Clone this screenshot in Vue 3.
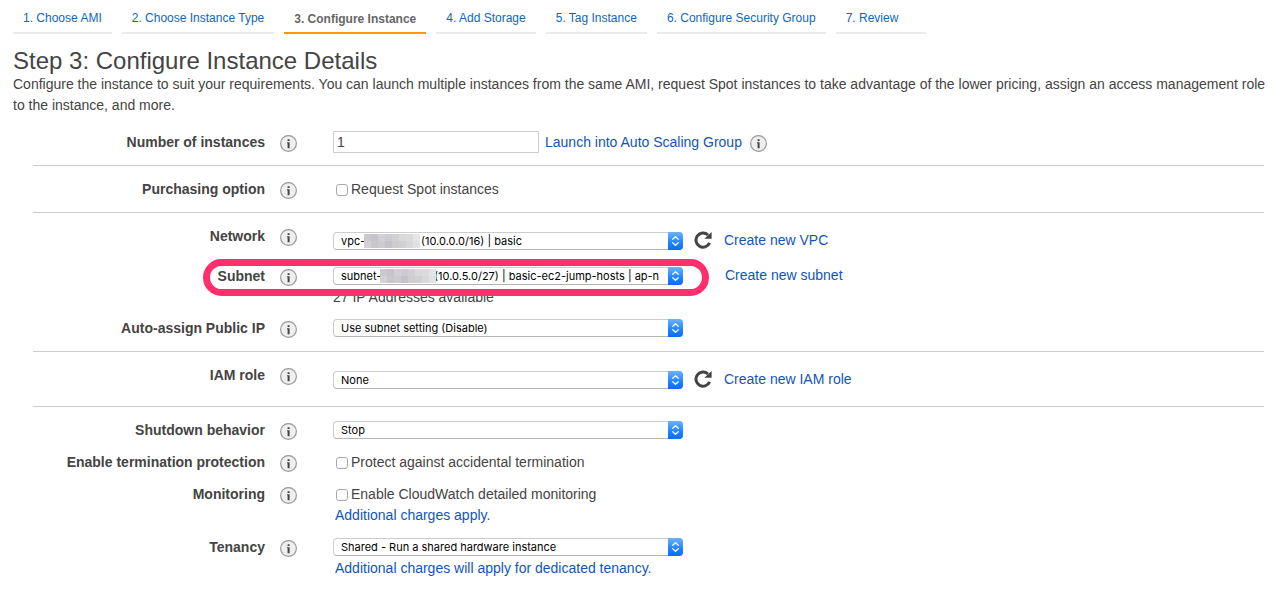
<script setup>
import { reactive } from 'vue'

const tabs = [
  '1. Choose AMI',
  '2. Choose Instance Type',
  '3. Configure Instance',
  '4. Add Storage',
  '5. Tag Instance',
  '6. Configure Security Group',
  '7. Review',
]
const activeTab = 2

const gap = (n) => '\u00a0'.repeat(n)

const sections = [
  [
    {
      id: 'count', label: 'Number of instances', type: 'text',
      link: 'Launch into Auto Scaling Group', info: true,
    },
  ],
  [{ id: 'spot', label: 'Purchasing option', type: 'check', text: 'Request Spot instances' }],
  [
    {
      id: 'network', label: 'Network', type: 'select', tall: true, refresh: true,
      option: `vpc-${gap(18)}(10.0.0.0/16) | basic`, mask: 'mask-network', link: 'Create new VPC',
    },
    {
      id: 'subnet', label: 'Subnet', type: 'select', marked: true, mask: 'mask-subnet',
      option: `subnet-${gap(17)}(10.0.5.0/27) | basic-ec2-jump-hosts | ap-n`,
      link: 'Create new subnet', note: '27 IP Addresses available',
    },
    { id: 'public-ip', label: 'Auto-assign Public IP', type: 'select', option: 'Use subnet setting (Disable)' },
  ],
  [
    {
      id: 'iam', label: 'IAM role', type: 'select', tall: true, refresh: true,
      option: 'None', link: 'Create new IAM role',
    },
  ],
  [
    { id: 'shutdown', label: 'Shutdown behavior', type: 'select', option: 'Stop' },
    { id: 'protect', label: 'Enable termination protection', type: 'check', text: 'Protect against accidental termination' },
    {
      id: 'monitoring', label: 'Monitoring', type: 'check', text: 'Enable CloudWatch detailed monitoring',
      noteLink: 'Additional charges apply.',
    },
    {
      id: 'tenancy', label: 'Tenancy', type: 'select', option: 'Shared - Run a shared hardware instance',
      noteLink: 'Additional charges will apply for dedicated tenancy.',
    },
  ],
]

const checked = reactive({ spot: false, protect: false, monitoring: false })
const count = reactive({ value: '1' })

const maskColors = [
  '#cbc8cc', '#c6c4c8', '#d2d0d4', '#cdcbd2', '#d3d0d3', '#d9d8da', '#dcdbdc', '#e6e5e6',
  '#d3d1d4', '#c9c7cb', '#cecbcf', '#c4c2ca', '#cfccd1', '#d0cfd2', '#d8d7d9', '#e2e1e2',
]
</script>

<template>
  <main class="page">
    <nav class="tabs" aria-label="Wizard steps">
      <a v-for="(t, i) in tabs" :key="t" href="#" class="tab" :class="{ active: i === activeTab }">{{ t }}</a>
    </nav>

    <header class="intro">
      <h1>Step 3: Configure Instance Details</h1>
      <p>
        Configure the instance to suit your requirements. You can launch multiple instances from the same AMI,
        request Spot instances to take advantage of the lower pricing, assign an access management role to the
        instance, and more.
      </p>
    </header>

    <form class="form" @submit.prevent>
      <section v-for="(rows, s) in sections" :key="s" class="section">
        <div v-for="row in rows" :key="row.id" class="row">
          <label class="name" :for="row.id">{{ row.label }}</label>
          <button type="button" class="info" :aria-label="`About ${row.label}`">
            <svg viewBox="0 0 17 17" width="17" height="17" aria-hidden="true">
              <circle cx="8.5" cy="8.5" r="7.9" fill="#efefef" stroke="#999" stroke-width="1.2" />
              <path d="M7.600 4.200h2v1.900h-2zM7 7.200h2.600v6H7.600V8.200H7z" fill="#444" />
            </svg>
          </button>
          <div class="field">
            <div class="line" :class="{ tall: row.tall }">
              <input v-if="row.type === 'text'" :id="row.id" v-model="count.value" class="text" type="text" />
              <template v-else-if="row.type === 'check'">
                <input :id="row.id" v-model="checked[row.id]" class="check" type="checkbox" />
                <label :for="row.id">{{ row.text }}</label>
              </template>
              <div v-else class="picker">
                <select :id="row.id"><option>{{ row.option }}</option></select>
                <span v-if="row.mask" class="mask" :class="row.mask" aria-hidden="true">
                  <i v-for="(c, k) in maskColors" :key="k" :style="{ background: c }"></i>
                </span>
                <span class="stepper" aria-hidden="true">
                  <svg viewBox="0 0 15 18" width="15" height="18">
                    <path d="M4.700 7.300 7.500 4.700l2.800 2.600M4.700 10.700l2.800 2.600 2.800-2.600" fill="none" stroke="#fff" stroke-width="1.200" stroke-linecap="round" stroke-linejoin="round" />
                  </svg>
                </span>
              </div>
              <button v-if="row.refresh" type="button" class="refresh" :aria-label="`Refresh ${row.label}`">
                <svg viewBox="0 0 18 18" width="18" height="18" aria-hidden="true">
                  <path d="M15.600 11.900A7.100 7.100 0 1 1 14 4" fill="none" stroke="#444" stroke-width="3" />
                  <path d="M17.600.900v6.900h-7.300z" fill="#444" />
                </svg>
              </button>
              <a v-if="row.link" href="#" :class="[`after-${row.type}`, { apart: row.type === 'select' && !row.refresh }]">{{ row.link }}</a>
              <button v-if="row.info" type="button" class="info inline" :aria-label="`About ${row.link}`">
                <svg viewBox="0 0 17 17" width="17" height="17" aria-hidden="true">
                  <circle cx="8.5" cy="8.5" r="7.9" fill="#efefef" stroke="#999" stroke-width="1.2" />
                  <path d="M7.600 4.200h2v1.900h-2zM7 7.200h2.600v6H7.600V8.200H7z" fill="#444" />
                </svg>
              </button>
            </div>
            <div v-if="row.note" class="note">{{ row.note }}</div>
            <a v-if="row.noteLink" href="#" class="note-link">{{ row.noteLink }}</a>
          </div>
          <span v-if="row.marked" class="marker" aria-hidden="true"></span>
        </div>
      </section>
    </form>
  </main>
</template>

<style>
body {
  background: #fff;
}
</style>

<style scoped>
.page {
  font-family: "Liberation Sans", Arial, sans-serif;
  font-size: 14px;
  line-height: 21px;
  color: #444;
}

a {
  color: #1155bb;
  text-decoration: none;
}

button {
  padding: 0;
  border: 0;
  background: none;
}

svg {
  display: block;
}

.tabs {
  display: flex;
  gap: 10px;
  padding: 0 13px;
  font-size: 12px;
}

.tab {
  box-sizing: border-box;
  min-width: 90px;
  height: 34px;
  padding: 8px 10px 0;
  border-bottom: 2px solid #eaeaea;
  color: #1166bb;
}

.tab.active {
  padding-top: 9px;
  border-color: #ff9900;
  color: #666;
  font-weight: bold;
}

.intro {
  padding: 14px 4px 0 13px;
}

h1 {
  margin: 0;
  font-size: 24px;
  font-weight: normal;
  line-height: 26px;
}

p {
  margin: 0;
}

.form {
  padding: 3px 18px 16px 33px;
}

.section {
  display: flex;
  flex-direction: column;
  gap: 11px;
  padding: 13px 0 12px;
  border-bottom: 1px solid #ccc;
}

.section:last-child {
  border-bottom: 0;
}

.row {
  position: relative;
  display: grid;
  grid-template-columns: 232px 17px 1fr;
  column-gap: 15px;
  align-items: start;
}

.name {
  font-weight: bold;
  text-align: right;
}

.info {
  margin-top: 3px;
}

.info.inline {
  margin-top: 2px;
  margin-left: 8px;
}

.field {
  padding-left: 21px;
}

.line {
  display: flex;
  align-items: center;
  height: 21px;
}

.line.tall {
  height: 29px;
}

.text {
  box-sizing: border-box;
  width: 206px;
  height: 22px;
  margin: 0 0 2px;
  padding: 0 3px;
  border: 1px solid #ccc;
  color: #444;
  font: inherit;
}

.check {
  appearance: none;
  box-sizing: border-box;
  width: 12px;
  height: 12px;
  margin: 1px 3px 0;
  border: 1px solid #aaa;
  border-radius: 3px;
  background: #fff;
}

.check:checked {
  background: #2b88f5;
}

.picker {
  position: relative;
  width: 350px;
  height: 18px;
  margin-bottom: 2px;
}

.tall .picker {
  margin-bottom: 0;
}

select {
  appearance: none;
  box-sizing: border-box;
  display: block;
  width: 100%;
  height: 18px;
  padding: 0 18px 0 7px;
  border: 1px solid #ccc;
  border-bottom-color: #b4b4b4;
  border-radius: 4px;
  background: #fff;
  color: #000;
  font-family: Inter, sans-serif;
  font-size: 11px;
}

.stepper {
  position: absolute;
  top: 0;
  right: 0;
  border-radius: 0 4px 4px 0;
  background: linear-gradient(#6cb3fa, #1f83fb 60%, #0a6cff);
  pointer-events: none;
}

.mask {
  position: absolute;
  top: 2px;
  display: grid;
  grid-template-columns: repeat(8, 7px);
  grid-auto-rows: 7px;
  pointer-events: none;
}

.mask-network {
  left: 31px;
}

.mask-subnet {
  left: 47px;
}

.refresh {
  margin: 0 0 2px 11px;
}

.after-text {
  margin-left: 6px;
}

.after-select {
  margin-left: 12px;
}

.after-select.apart {
  margin: 0 0 2px 42px;
}

.note {
  line-height: 20px;
}

.note-link {
  margin-left: 2px;
}

.marker {
  position: absolute;
  top: -7px;
  left: 170px;
  box-sizing: border-box;
  width: 506px;
  height: 37px;
  border: 7px solid #ff2e6d;
  border-radius: 19px;
  pointer-events: none;
}
</style>
